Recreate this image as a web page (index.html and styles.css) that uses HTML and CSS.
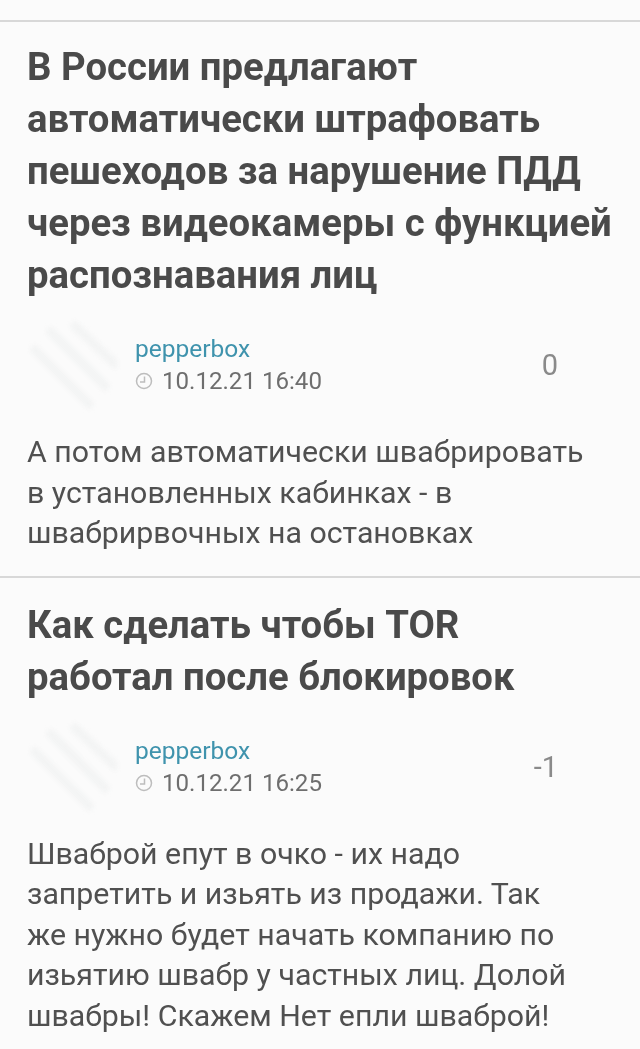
FILE: index.html
```html
<!DOCTYPE html>
<html lang="ru">
<head>
<meta charset="utf-8">
<title>Комментарии</title>
<link rel="stylesheet" href="styles.css">
</head>
<body>
<main class="feed">
  <article class="item item-first">
    <h2 class="title">В России предлагают автоматически штрафовать пешеходов за нарушение ПДД через видеокамеры с функцией распознавания лиц</h2>
    <div class="meta">
      <svg class="avatar" viewBox="0 0 90 90" aria-hidden="true">
        <g stroke="#f3f4f4" stroke-width="9" stroke-linecap="round" fill="none">
          <path d="M48 6 L88 44"/><path d="M24 12 L78 66"/><path d="M8 30 L62 84"/>
        </g>
      </svg>
      <div class="who">
        <div class="author">pepperbox</div>
        <div class="date">
          <svg class="clock" viewBox="0 0 18 18" aria-hidden="true"><circle cx="9" cy="9" r="7.5"/><path d="M9.5 4.5V10H5"/></svg>
          <span>10.12.21 16:40</span>
        </div>
      </div>
      <div class="score">0</div>
    </div>
    <p class="body">А потом автоматически швабрировать в установленных кабинках - в швабрирвочных на остановках</p>
  </article>
  <article class="item item-next">
    <h2 class="title">Как сделать чтобы TOR работал после блокировок</h2>
    <div class="meta">
      <svg class="avatar" viewBox="0 0 90 90" aria-hidden="true">
        <g stroke="#f3f4f4" stroke-width="9" stroke-linecap="round" fill="none">
          <path d="M48 6 L88 44"/><path d="M24 12 L78 66"/><path d="M8 30 L62 84"/>
        </g>
      </svg>
      <div class="who">
        <div class="author">pepperbox</div>
        <div class="date">
          <svg class="clock" viewBox="0 0 18 18" aria-hidden="true"><circle cx="9" cy="9" r="7.5"/><path d="M9.5 4.5V10H5"/></svg>
          <span>10.12.21 16:25</span>
        </div>
      </div>
      <div class="score">-1</div>
    </div>
    <p class="body">Шваброй епут в очко - их надо запретить и изьять из продажи. Так же нужно будет начать компанию по изьятию швабр у частных лиц. Долой швабры! Скажем Нет епли шваброй!</p>
  </article>
</main>
</body>
</html>
```
FILE: styles.css
```css
html, body {
  margin: 0;
  padding: 0;
  background: #fbfbfb;
}
body {
  height: 1049px;
  overflow: hidden;
  font-family: Roboto, "Liberation Sans", sans-serif;
}
.feed {
  padding-top: 20px;
  filter: blur(0.4px);
}
.item {
  border-top: 2px solid #d8d8d8;
  padding: 0 27px;
}
.item-first {
  padding-bottom: 22px;
}
.title {
  margin: 0;
  padding-top: 19px;
  font-size: 38.3px;
  line-height: 52px;
  font-weight: 700;
  color: #4a4a4a;
}
.item-next .title {
  padding-top: 21px;
}
.meta {
  display: flex;
  align-items: center;
  margin-top: 19px;
  height: 90px;
}
.avatar {
  width: 90px;
  height: 90px;
  flex: none;
  filter: blur(2px);
}
.who {
  margin-left: 18px;
  flex: 1;
}
.author {
  font-size: 24.5px;
  line-height: 32px;
  color: #3f93ad;
}
.date {
  display: flex;
  align-items: center;
  gap: 9px;
  font-size: 24.1px;
  line-height: 32px;
  color: #6e6e6e;
}
.clock {
  width: 18px;
  height: 18px;
  fill: none;
  stroke: #bdbdbd;
  stroke-width: 1.5;
}
.score {
  font-size: 29px;
  color: #8a8a8a;
  margin-right: 55px;
}
.body {
  margin: 22px 28px 0 0;
  font-size: 30.3px;
  line-height: 40.5px;
  color: #505050;
}
```
